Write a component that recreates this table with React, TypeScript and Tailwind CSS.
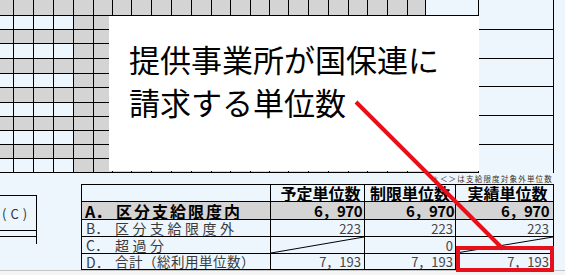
import React from "react";

const COLS = [14, 20, 20, 20, 20, 19, 19, 20, 20, 20, 20, 19, 20, 19, 19, 20, 20, 20, 19, 20, 20, 18];
const WCLS: Record<number, string> = {
  14: "w-[14px]",
  18: "w-[18px]",
  19: "w-[19px]",
  20: "w-[20px]",
};
const HCLS: Record<number, string> = {
  14: "h-[14px]",
  15: "h-[15px]",
  16: "h-[16px]",
};
const ROWS = [14, 14, 15, 15, 14, 15, 14, 14, 14, 14, 14];
const GRAY = "bg-[#d4d4d4]";
const LIGHT = "bg-[#edf5fd]";

function Grid() {
  return (
    <div className="flex flex-col w-[479px] shrink-0">
      <div className="flex h-[16px]">
        {COLS.map((w, i) => (
          <div key={i} className={`${WCLS[w]} h-full shrink-0 border-r border-b border-black ${GRAY}`} />
        ))}
        <div className={`w-[53px] h-full shrink-0 border-r border-b border-black ${LIGHT}`} />
      </div>
      {ROWS.map((h, r) => (
        <div key={r} className={`flex ${HCLS[h]}`}>
          {COLS.map((w, i) => (
            <div
              key={i}
              className={`${WCLS[w]} h-full shrink-0 border-r border-b border-black ${i < 4 && r % 2 === 0 ? LIGHT : GRAY}`}
            />
          ))}
          <div className={`w-[53px] h-full shrink-0 border-r border-b border-black ${GRAY}`} />
        </div>
      ))}
    </div>
  );
}

function RightPanel() {
  return (
    <div className={`flex flex-col w-[75px] shrink-0 border-r border-black ${LIGHT}`}>
      <div className="h-[30px] border-b border-black" />
      <div className="h-[29px] border-b border-black" />
      <div className="h-[28px] border-b border-black" />
      <div className="h-[29px] border-b border-black" />
      <div className="h-[29px] border-b border-black" />
      <div className="flex-1" />
    </div>
  );
}

function Diag() {
  return (
    <svg className="absolute inset-0 w-full h-full" viewBox="0 0 100 100" preserveAspectRatio="none">
      <line x1="0" y1="100" x2="100" y2="0" stroke="#000" strokeWidth="1" vectorEffect="non-scaling-stroke" />
    </svg>
  );
}

const cell = "border-r border-b border-black flex items-center whitespace-nowrap";

function Table() {
  return (
    <div className="grid grid-cols-[189px_94px_91px_98px] grid-rows-[17px_18px_17px_17px_16px] border-t border-l border-black w-[473px]">
      {/* header */}
      <div className={cell} />
      <div className={`${cell} justify-center pl-[6px] text-[16px] font-bold text-black`}>予定単位数</div>
      <div className={`${cell} justify-center text-[16px] font-bold text-black`}>制限単位数</div>
      <div className={`${cell} justify-center pl-[6px] text-[16px] font-bold text-black`}>実績単位数</div>

      {/* A */}
      <div className={`${cell} bg-[#d4d4d4] pl-[3px] text-[16px] font-bold text-black`}>
        <span className="w-[31px] shrink-0">A．</span>
        <span className="tracking-[2px]">区分支給限度内</span>
      </div>
      <div className={`${cell} bg-[#d4d4d4] justify-end pr-[2px] text-[15px] font-bold text-black tracking-[-0.5px]`}>6，970</div>
      <div className={`${cell} bg-[#d4d4d4] justify-end pr-[1px] text-[15px] font-bold text-black tracking-[-0.5px]`}>6，970</div>
      <div className={`${cell} bg-[#d4d4d4] justify-end pr-[4px] text-[15px] font-bold text-black tracking-[-0.5px]`}>6，970</div>

      {/* B */}
      <div className={`${cell} pl-[4px] text-[14px] text-[#3a3a3a]`}>
        <span className="w-[29px] shrink-0">B．</span>
        <span className="tracking-[3.5px]">区分支給限度外</span>
      </div>
      <div className={`${cell} justify-end pr-[3px] text-[13px] text-[#444]`}>223</div>
      <div className={`${cell} justify-end pr-[2px] text-[13px] text-[#444]`}>223</div>
      <div className={`${cell} justify-end pr-[4px] text-[13px] text-[#444]`}>223</div>

      {/* C */}
      <div className={`${cell} pl-[4px] text-[14px] text-[#3a3a3a]`}>
        <span className="w-[29px] shrink-0">C．</span>
        <span className="tracking-[3.5px]">超過分</span>
      </div>
      <div className={`${cell} relative`}>
        <Diag />
      </div>
      <div className={`${cell} justify-end pr-[2px] text-[13px] text-[#444]`}>0</div>
      <div className={`${cell} relative`}>
        <Diag />
      </div>

      {/* D */}
      <div className={`${cell} pl-[4px] text-[14px] text-[#3a3a3a]`}>
        <span className="w-[29px] shrink-0">D．</span>
        <span className="tracking-[0.5px] text-[13.5px]">合計（総利用単位数）</span>
      </div>
      <div className={`${cell} justify-end pr-[3px] text-[13px] text-[#444]`}>7，193</div>
      <div className={`${cell} justify-end pr-[2px] text-[13px] text-[#444]`}>7，193</div>
      <div className={`${cell} justify-end pr-[4px] text-[13px] text-[#444]`}>7，193</div>
    </div>
  );
}

export default function App() {
  return (
    <div className="relative w-[565px] h-[275px] overflow-hidden bg-[#edf5fd] font-['Noto_Sans_CJK_JP','Noto_Sans',sans-serif] leading-none">
      {/* top spreadsheet area */}
      <div className="flex h-[173px]">
        <Grid />
        <RightPanel />
        <div className="flex-1" />
      </div>

      {/* bottom area */}
      <div className="flex h-[97px]">
        <div className="w-[37px] h-[49px] mt-[22px] border-t border-r border-black flex flex-col shrink-0">
          <div className="h-[35px] border-b border-black flex items-center pl-[2px] text-[13px] tracking-[4px] text-[#333]">
            (C)
          </div>
          <div className="h-[6px] border-b border-black" />
          <div className="flex-1" />
        </div>
        <div className="ml-[44px] flex flex-col">
          <div className="h-[11px] flex items-center justify-end pr-[1px] text-[7.5px] tracking-[1.2px] text-[#333] whitespace-nowrap">
            ＊＜＞は支給限度対象外単位数
          </div>
          <Table />
        </div>
      </div>
      <div className="h-[5px] border-t border-[#c4c4c4] bg-[#f4f4f4]" />

      {/* callout text box */}
      <div className="absolute left-[109px] top-[16px] w-[370px] h-[155px] bg-white pl-[20px] pt-[21px] text-[31px] leading-[43px] text-black whitespace-nowrap">
        <div>提供事業所が国保連に</div>
        <div>請求する単位数</div>
      </div>

      {/* red arrow + highlight */}
      <svg className="absolute inset-0 pointer-events-none" width="565" height="275" viewBox="0 0 565 275">
        <line x1="356" y1="102" x2="503" y2="249" stroke="#e60f1a" strokeWidth="4" />
        <rect x="458" y="248" width="94" height="22" fill="none" stroke="#e60f1a" strokeWidth="4" />
      </svg>
    </div>
  );
}
